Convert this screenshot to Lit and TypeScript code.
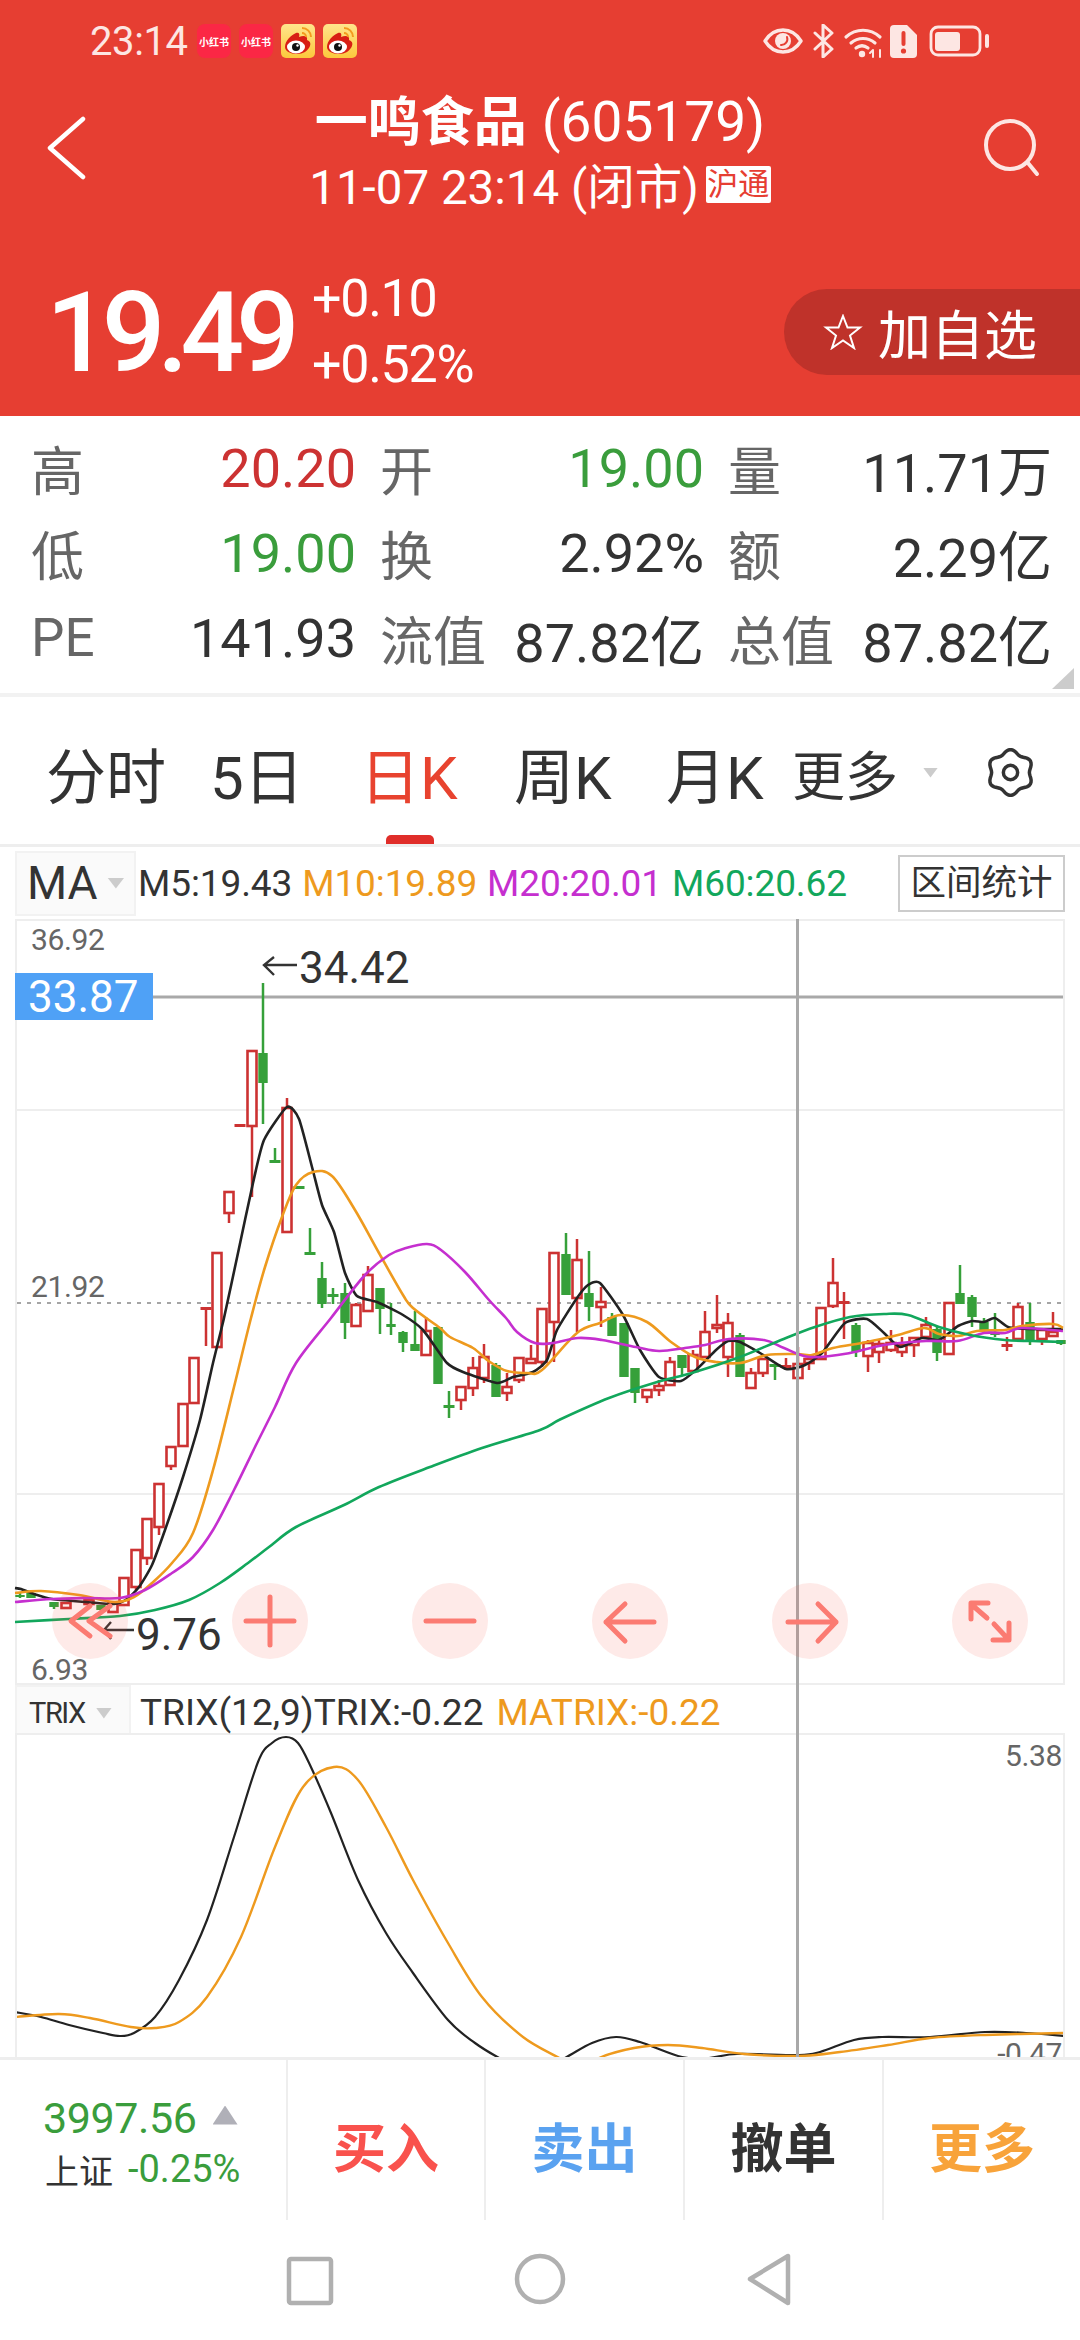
import {LitElement, html, css, svg} from 'lit';
import {customElement} from 'lit/decorators.js';

type Pt = [number, number];
// x, wick top, body top, body bottom, wick bottom, r(ise) or g(reen)
type Candle = [number, number, number, number, number, 'r' | 'g'];

// all chart data is in page pixels, the svg viewBoxes map it straight onto the page
const CANDLES: Candle[] = [
  [20, 1593, 1595, 1597, 1598, 'g'], [31, 1593, 1593, 1598, 1598, 'g'], [54, 1602, 1602, 1607, 1609, 'g'],
  [66, 1603, 1603, 1608, 1609, 'r'], [89, 1600, 1600, 1604, 1605, 'r'], [101, 1605, 1605, 1610, 1612, 'g'],
  [113, 1603, 1603, 1612, 1612, 'r'], [124, 1578, 1578, 1605, 1605, 'r'], [136, 1550, 1550, 1587, 1590, 'r'],
  [147, 1519, 1519, 1558, 1565, 'r'], [159, 1484, 1484, 1527, 1535, 'r'], [171, 1447, 1447, 1466, 1470, 'r'],
  [183, 1404, 1404, 1446, 1446, 'r'], [194, 1358, 1358, 1403, 1404, 'r'], [206, 1308, 1308, 1309, 1346, 'r'],
  [217, 1253, 1253, 1347, 1347, 'r'], [229, 1192, 1192, 1213, 1223, 'r'], [240, 1125, 1125, 1126, 1126, 'r'],
  [252, 1051, 1051, 1126, 1197, 'r'], [263, 983, 1053, 1083, 1124, 'g'], [275, 1148, 1161, 1162, 1162, 'g'],
  [287, 1098, 1108, 1232, 1232, 'r'], [299, 1187, 1187, 1188, 1188, 'g'], [310, 1228, 1253, 1254, 1254, 'g'],
  [322, 1262, 1278, 1304, 1308, 'g'], [333, 1288, 1295, 1296, 1304, 'g'], [345, 1283, 1293, 1323, 1339, 'g'],
  [356, 1303, 1305, 1326, 1326, 'r'], [368, 1266, 1275, 1311, 1311, 'r'], [380, 1288, 1288, 1309, 1334, 'g'],
  [391, 1303, 1324, 1327, 1335, 'g'], [403, 1331, 1332, 1343, 1352, 'g'], [415, 1311, 1344, 1351, 1351, 'g'],
  [426, 1317, 1331, 1355, 1355, 'r'], [438, 1327, 1327, 1384, 1384, 'g'], [449, 1391, 1406, 1407, 1418, 'g'],
  [461, 1387, 1387, 1400, 1410, 'r'], [473, 1357, 1368, 1388, 1396, 'r'], [484, 1344, 1357, 1378, 1383, 'r'],
  [496, 1363, 1365, 1397, 1397, 'g'], [507, 1373, 1387, 1393, 1401, 'r'], [519, 1358, 1358, 1380, 1383, 'r'],
  [531, 1345, 1359, 1363, 1363, 'r'], [542, 1309, 1309, 1362, 1367, 'r'], [554, 1253, 1253, 1322, 1362, 'r'],
  [566, 1233, 1254, 1295, 1295, 'g'], [577, 1239, 1260, 1298, 1332, 'r'], [589, 1251, 1293, 1307, 1321, 'g'],
  [601, 1287, 1302, 1307, 1327, 'r'], [612, 1313, 1317, 1336, 1336, 'g'], [624, 1323, 1323, 1377, 1377, 'g'],
  [635, 1368, 1368, 1393, 1403, 'g'], [647, 1390, 1390, 1397, 1403, 'r'], [659, 1380, 1386, 1390, 1396, 'r'],
  [670, 1357, 1362, 1385, 1385, 'r'], [682, 1355, 1355, 1368, 1375, 'g'], [693, 1350, 1355, 1371, 1371, 'r'],
  [705, 1311, 1332, 1357, 1357, 'r'], [717, 1295, 1325, 1328, 1333, 'r'], [728, 1313, 1323, 1357, 1377, 'r'],
  [740, 1333, 1335, 1377, 1377, 'g'], [751, 1368, 1373, 1388, 1388, 'r'], [763, 1359, 1359, 1373, 1377, 'r'],
  [775, 1365, 1365, 1366, 1380, 'g'], [786, 1358, 1366, 1367, 1370, 'r'], [798, 1347, 1364, 1378, 1378, 'r'],
  [809, 1359, 1359, 1363, 1370, 'r'], [821, 1308, 1308, 1359, 1359, 'r'], [833, 1258, 1283, 1306, 1308, 'r'],
  [844, 1292, 1302, 1303, 1339, 'r'], [856, 1323, 1325, 1352, 1357, 'g'], [868, 1340, 1343, 1356, 1372, 'r'],
  [879, 1340, 1344, 1352, 1363, 'r'], [891, 1330, 1343, 1350, 1352, 'r'], [902, 1337, 1345, 1352, 1357, 'r'],
  [914, 1338, 1338, 1345, 1357, 'r'], [926, 1317, 1325, 1337, 1337, 'r'], [937, 1327, 1329, 1353, 1361, 'g'],
  [949, 1303, 1303, 1354, 1354, 'r'], [960, 1265, 1293, 1304, 1304, 'g'], [972, 1295, 1297, 1317, 1327, 'g'],
  [984, 1318, 1322, 1330, 1333, 'g'], [995, 1313, 1332, 1335, 1337, 'g'], [1007, 1337, 1345, 1346, 1351, 'r'],
  [1018, 1303, 1307, 1339, 1339, 'r'], [1030, 1303, 1322, 1341, 1345, 'g'], [1042, 1330, 1330, 1339, 1345, 'r'],
  [1053, 1312, 1332, 1336, 1336, 'r'], [1061, 1340, 1340, 1344, 1345, 'g'],
];

const MA5: Pt[] = [
  [15, 1588], [21, 1589], [34, 1594], [52, 1599], [86, 1602], [114, 1604], [127, 1599], [139, 1587], [152, 1565],
  [165, 1530], [183, 1477], [200, 1420], [213, 1363], [224, 1318], [238, 1253], [253, 1183], [264, 1140], [287, 1107],
  [299, 1119], [312, 1167], [322, 1205], [334, 1232], [345, 1273], [357, 1296], [377, 1302], [403, 1315], [423, 1330],
  [447, 1363], [463, 1372], [497, 1383], [513, 1377], [533, 1372], [547, 1360], [557, 1330], [577, 1298], [588, 1285],
  [600, 1283], [623, 1315], [640, 1350], [659, 1377], [681, 1381], [698, 1368], [716, 1350], [728, 1341], [740, 1342],
  [760, 1353], [786, 1369], [805, 1365], [822, 1353], [845, 1323], [867, 1319], [884, 1333], [900, 1347], [922, 1338],
  [939, 1340], [958, 1326], [972, 1321], [984, 1322], [995, 1318], [1008, 1327], [1029, 1329], [1063, 1329],
];
const MA10: Pt[] = [
  [15, 1593], [41, 1591], [79, 1595], [114, 1602], [134, 1597], [152, 1583], [172, 1563], [193, 1533], [213, 1470],
  [234, 1387], [251, 1318], [265, 1267], [282, 1217], [296, 1185], [313, 1172], [332, 1176], [355, 1210], [379, 1253],
  [403, 1295], [413, 1308], [440, 1328], [450, 1337], [473, 1348], [490, 1362], [507, 1371], [527, 1373], [542, 1370],
  [577, 1333], [600, 1323], [621, 1315], [647, 1322], [671, 1342], [695, 1357], [716, 1362], [740, 1363], [767, 1355],
  [797, 1354], [812, 1355], [833, 1348], [867, 1342], [898, 1335], [924, 1328], [939, 1334], [958, 1336], [977, 1331],
  [1005, 1330], [1022, 1326], [1053, 1324], [1063, 1328],
];
const MA20: Pt[] = [
  [15, 1602], [52, 1599], [86, 1598], [120, 1598], [145, 1590], [172, 1573], [193, 1557], [213, 1530], [234, 1490],
  [255, 1447], [275, 1407], [296, 1363], [331, 1318], [365, 1275], [389, 1255], [406, 1248], [427, 1244], [441, 1250],
  [465, 1272], [489, 1300], [506, 1318], [517, 1332], [535, 1343], [553, 1343], [578, 1338], [602, 1340], [636, 1347],
  [659, 1351], [685, 1348], [705, 1345], [729, 1339], [764, 1340], [784, 1348], [810, 1357], [850, 1353], [884, 1345],
  [926, 1341], [957, 1341], [984, 1333], [1005, 1333], [1022, 1328], [1063, 1331],
];
const MA60: Pt[] = [
  [15, 1622], [69, 1619], [120, 1616], [155, 1610], [189, 1600], [220, 1583], [248, 1563], [269, 1547], [296, 1527],
  [344, 1505], [379, 1487], [430, 1467], [482, 1448], [540, 1430], [561, 1419], [609, 1398], [654, 1383], [695, 1372],
  [740, 1357], [781, 1340], [815, 1327], [850, 1317], [884, 1314], [908, 1315], [939, 1327], [970, 1335], [1005, 1340],
  [1032, 1341], [1063, 1342],
];
const TRIX: Pt[] = [
  [15, 2012], [41, 2017], [69, 2025], [103, 2033], [120, 2036], [134, 2033], [155, 2017], [179, 1980], [207, 1920],
  [234, 1837], [258, 1762], [272, 1743], [286, 1737], [298, 1743], [310, 1765], [331, 1813], [358, 1880], [386, 1933],
  [413, 1973], [448, 2020], [475, 2043], [501, 2059], [533, 2075], [565, 2058], [592, 2043], [616, 2037], [640, 2042],
  [682, 2057], [709, 2058], [737, 2054], [799, 2055], [820, 2052], [854, 2040], [882, 2037], [930, 2037], [985, 2032],
  [1026, 2033], [1065, 2036],
];
const MATRIX: Pt[] = [
  [15, 2017], [59, 2014], [90, 2018], [131, 2027], [155, 2028], [179, 2022], [207, 1997], [241, 1937], [275, 1847],
  [303, 1787], [334, 1767], [358, 1780], [386, 1827], [413, 1880], [448, 1943], [482, 1997], [523, 2037], [561, 2059],
  [580, 2072], [599, 2058], [634, 2048], [668, 2045], [702, 2048], [744, 2054], [799, 2056], [840, 2052], [888, 2045],
  [930, 2038], [985, 2035], [1065, 2033],
];

const STATS = [
  ['高', '20.20', 'up'], ['开', '19.00', 'down'], ['量', '11.71万', ''],
  ['低', '19.00', 'down'], ['换', '2.92%', ''], ['额', '2.29亿', ''],
  ['PE', '141.93', ''], ['流值', '87.82亿', ''], ['总值', '87.82亿', ''],
];

const TABS = ['分时', '5日', '日K', '周K', '月K'];

// catmull-rom through the sampled points, a bigger k stays closer to straight segments
function smooth(p: Pt[], k = 6) {
  let d = `M${p[0][0]} ${p[0][1]}`;
  for (let i = 0; i < p.length - 1; i++) {
    const a = p[i - 1] || p[i];
    const b = p[i];
    const c = p[i + 1];
    const e = p[i + 2] || c;
    const c1 = [b[0] + (c[0] - a[0]) / k, b[1] + (c[1] - a[1]) / k];
    const c2 = [c[0] - (e[0] - b[0]) / k, c[1] - (e[1] - b[1]) / k];
    d += `C${c1[0].toFixed(1)} ${c1[1].toFixed(1)} ${c2[0].toFixed(1)} ${c2[1].toFixed(1)} ${c[0]} ${c[1]}`;
  }
  return d;
}

function gearPath() {
  const pts: string[] = [];
  for (let i = 0; i < 72; i++) {
    const t = (i / 72) * Math.PI * 2;
    const r = 20.5 + 2 * Math.cos(6 * t);
    pts.push(`${(24 + r * Math.sin(t)).toFixed(1)} ${(24 - r * Math.cos(t)).toFixed(1)}`);
  }
  return 'M' + pts.join('L') + 'Z';
}

const weibo = html`<svg class="note" viewBox="0 0 34 34">
  <defs>
    <linearGradient id="wb" x1="0" y1="0" x2="0" y2="1">
      <stop offset="0" stop-color="#ffe58c"></stop>
      <stop offset="1" stop-color="#fcc83c"></stop>
    </linearGradient>
  </defs>
  <rect width="34" height="34" rx="5" fill="url(#wb)"></rect>
  <path d="M4 23c0-6 6-12 11-14 3-1 4 1 3 4 5-2 9-1 8 3 3 1 4 3 3 6-2 5-7 8-13 8-7 0-12-3-12-7z" fill="#d81e14"></path>
  <ellipse cx="15" cy="23" rx="9" ry="6.5" fill="#fff"></ellipse>
  <circle cx="15" cy="23" r="4" fill="#111"></circle>
  <circle cx="16.5" cy="21.5" r="1.2" fill="#fff"></circle>
  <path d="M21 4a9 9 0 0 1 9 9M21 9a4 4 0 0 1 4 4" fill="none" stroke="#f39a1e" stroke-width="2"></path>
</svg>`;

@customElement('kline-chart')
export class KlineChart extends LitElement {
  static styles = css`
    :host {
      display: block;
      position: relative;
    }
    svg {
      display: block;
    }
    .panel {
      margin: 0 15px;
      border: 2px solid #eee;
      box-sizing: border-box;
    }
    .main {
      height: 766px;
    }
    .main svg {
      width: 1046px;
      height: 762px;
      overflow: visible;
    }
    .sub {
      height: 324px;
      border-bottom: none;
    }
    .sub svg {
      width: 1046px;
      height: 322px;
    }
    .trix-row {
      display: flex;
      align-items: center;
      height: 48px;
      padding-left: 15px;
      font-size: 37px;
      color: #333;
      white-space: nowrap;
    }
    .trix-text {
      padding-top: 7px;
    }
    .trix-box {
      display: flex;
      align-items: center;
      box-sizing: border-box;
      width: 116px;
      height: 48px;
      margin-right: 9px;
      padding: 6px 0 0 12px;
      background: #fafafa;
      border: 2px solid #f2f2f2;
      border-bottom: none;
      font-size: 29px;
      letter-spacing: -1.4px;
    }
    .tri {
      width: 16px;
      height: 11px;
      margin-left: 11px;
      background: #ccc;
      clip-path: polygon(0 0, 100% 0, 50% 100%);
    }
    .ma10 {
      margin-left: 13px;
      color: #ee9a1e;
    }
    .cross {
      position: absolute;
      left: 796px;
      top: 0;
      bottom: 0;
      width: 3px;
      background: #a9a9a9;
    }
    .zoom-bar {
      position: absolute;
      left: 0;
      top: 664px;
      display: grid;
      grid-template-columns: repeat(6, 180px);
      justify-items: center;
    }
    .zoom-btn {
      width: 76px;
      height: 76px;
      border-radius: 50%;
      background: rgba(246, 80, 66, 0.12);
    }
    .zoom-btn path {
      fill: none;
      stroke: #fb7b72;
      stroke-width: 5;
      stroke-linecap: round;
      stroke-linejoin: round;
    }
    .axis {
      font-size: 30px;
      letter-spacing: -0.4px;
      fill: #666;
    }
    .mark {
      font-size: 44px;
      fill: #333;
    }
    .now {
      font-size: 44px;
      fill: #fff;
    }
  `;

  _candle(c: Candle) {
    const [x, hi, top, bottom, lo, kind] = c;
    const color = kind === 'r' ? '#cc3232' : '#36a03a';
    const wick = svg`<path d="M${x} ${hi}V${lo}" stroke=${color} stroke-width="2.5"></path>`;
    if (bottom - top <= 1) {
      return svg`${wick}<rect x=${x - 5.5} y=${top - 1} width="11" height="3" fill=${color}></rect>`;
    }
    if (kind === 'g') {
      return svg`${wick}<rect x=${x - 4.7} y=${top} width="9.4" height=${bottom - top} fill=${color}></rect>`;
    }
    return svg`${wick}<rect x=${x - 4.5} y=${top} width="9" height=${bottom - top} fill="#fff" stroke=${color} stroke-width="2.6"></rect>`;
  }

  render() {
    const line = (p: Pt[], color: string, w = 2.6, k = 6) =>
      svg`<path d=${smooth(p, k)} fill="none" stroke=${color} stroke-width=${w} stroke-linejoin="round"></path>`;
    return html`
      <div class="panel main">
        <svg viewBox="17 921 1046 762">
          <path d="M17 1110H1063M17 1494H1063" stroke="#eee" stroke-width="2"></path>
          <path d="M17 1303H1063" stroke="#888" stroke-width="1.5" stroke-dasharray="4 6"></path>
          <path d="M153 997H1063" stroke="#a9a9a9" stroke-width="3"></path>
          ${CANDLES.map((c) => this._candle(c))}
          ${line(MA5, '#222', 2.6, 10)} ${line(MA10, '#ee9a1e')} ${line(MA20, '#c52fcf')} ${line(MA60, '#12a75c')}
          <text class="axis" x="31" y="950">36.92</text>
          <text class="axis" x="31" y="1297">21.92</text>
          <text class="axis" x="31" y="1680">6.93</text>
          <rect x="15" y="973" width="138" height="47" fill="#4fa1f6"></rect>
          <text class="now" x="28" y="1012">33.87</text>
          <path d="M297 965H264M274 957L264 965L274 975M134 1630H104M111 1622L104 1630L111 1639" fill="none" stroke="#333" stroke-width="2.4"></path>
          <text class="mark" x="299" y="983">34.42</text>
          <text class="mark" x="136" y="1650">9.76</text>
        </svg>
      </div>
      <div class="trix-row">
        <div class="trix-box">TRIX<span class="tri"></span></div>
        <span class="trix-text">TRIX(12,9)TRIX:-0.22<span class="ma10">MATRIX:-0.22</span></span>
      </div>
      <div class="panel sub">
        <svg viewBox="17 1735 1046 322">
          ${line(TRIX, '#222', 2.2)} ${line(MATRIX, '#ee9a1e', 2.4)}
          <text class="axis" x="1062" y="1766" text-anchor="end">5.38</text>
          <text class="axis" x="1062" y="2064" text-anchor="end">-0.47</text>
        </svg>
      </div>
      <div class="cross"></div>
      <div class="zoom-bar">
        <svg class="zoom-btn" viewBox="0 0 76 76"><path d="M38 23L19 38L38 53M58 23L37 38L58 53"></path></svg>
        <svg class="zoom-btn" viewBox="0 0 76 76"><path d="M14 38H62M38 14V62"></path></svg>
        <svg class="zoom-btn" viewBox="0 0 76 76"><path d="M14 38H62"></path></svg>
        <svg class="zoom-btn" viewBox="0 0 76 76"><path d="M14 39H62M33 21L14 39L33 58"></path></svg>
        <svg class="zoom-btn" viewBox="0 0 76 76"><path d="M16 39H64M46 21L64 39L46 58"></path></svg>
        <svg class="zoom-btn" viewBox="0 0 76 76"><path d="M36 20H19V36M20 22L35 35M41 57H57V40M42 41L56 56"></path></svg>
      </div>
    `;
  }
}

@customElement('app-root')
export class AppRoot extends LitElement {
  static styles = css`
    :host {
      display: block;
      width: 1080px;
      height: 2340px;
      overflow: hidden;
      background: #fff;
      font-family: Roboto, 'Noto Sans CJK SC', sans-serif;
      color: #333;
    }
    svg {
      display: block;
    }

    /* red quote header */
    .header {
      height: 416px;
      box-sizing: border-box;
      background: #e63e32;
      color: #fff;
    }
    .status {
      display: flex;
      align-items: center;
      height: 82px;
      padding: 0 90px;
      color: #fde6e3;
    }
    .clock {
      width: 107px;
      font-size: 40px;
      letter-spacing: -0.4px;
    }
    .note {
      width: 34px;
      height: 34px;
      margin-right: 8px;
    }
    .xhs {
      display: flex;
      align-items: center;
      justify-content: center;
      background: #fb2745;
      border-radius: 8px;
      color: #fff;
      font-size: 10px;
      font-weight: 700;
    }
    .status-icons {
      width: 227px;
      height: 34px;
      margin-left: auto;
    }
    .titlebar {
      display: grid;
      grid-template-columns: 160px 1fr 160px;
      align-items: center;
      height: 130px;
    }
    .back {
      width: 40px;
      height: 64px;
      margin-left: 47px;
    }
    .search {
      width: 58px;
      height: 60px;
      justify-self: end;
      margin-right: 39px;
    }
    .title-block {
      text-align: center;
    }
    .title {
      font-size: 55px;
      line-height: 80px;
      white-space: nowrap;
    }
    .title b {
      font-size: 53px;
      font-weight: 700;
      margin-right: 15px;
    }
    .subtitle {
      display: flex;
      align-items: center;
      justify-content: center;
      font-size: 47.5px;
      line-height: 50px;
      white-space: nowrap;
    }
    .tag {
      margin-left: 7px;
      width: 65px;
      height: 37px;
      margin-top: -8px;
      background: #fff;
      border-radius: 2px;
      color: #e63e32;
      font-size: 31px;
      line-height: 37px;
      text-align: center;
    }
    .quote {
      display: flex;
      align-items: center;
      height: 120px;
      margin-top: 60px;
      padding-left: 46px;
    }
    .price {
      width: 266px;
      font-size: 112px;
      font-weight: 500;
      letter-spacing: -8px;
    }
    .change {
      font-size: 52px;
      line-height: 66px;
      letter-spacing: -1.3px;
    }
    .watch {
      display: flex;
      align-items: center;
      box-sizing: border-box;
      width: 296px;
      height: 86px;
      margin-left: auto;
      padding-left: 39px;
      background: #bf322a;
      border-radius: 43px 0 0 43px;
      font-size: 53px;
    }
    .watch svg {
      width: 40px;
      height: 36px;
      margin-right: 15px;
    }

    /* high / low table */
    .stats {
      position: relative;
      display: grid;
      grid-template-columns: 325px 324px 324px;
      grid-auto-rows: 85px;
      column-gap: 24px;
      height: 255px;
      padding: 9px 28px 13px 31px;
      border-bottom: 4px solid #f2f2f2;
    }
    .stat {
      display: flex;
      align-items: center;
      justify-content: space-between;
      font-size: 53px;
      white-space: nowrap;
    }
    .stat label {
      color: #666;
    }
    .stat span {
      margin-top: 2px;
      font-size: 54px;
    }
    .up {
      color: #cc3232;
    }
    .down {
      color: #3a9d3c;
    }
    .corner {
      position: absolute;
      right: 6px;
      bottom: 4px;
      width: 22px;
      height: 21px;
      background: #ccc;
      clip-path: polygon(100% 0, 100% 100%, 0 100%);
    }

    /* period tabs */
    .tabs {
      display: grid;
      grid-template-columns: 164px 150px 154px 152px 126px 131px 63px auto;
      align-items: center;
      height: 147px;
      padding-left: 46px;
      border-bottom: 3px solid #eee;
      font-size: 60px;
      white-space: nowrap;
    }
    .tab {
      position: relative;
      display: flex;
      align-items: center;
      height: 100%;
      padding-top: 4px;
      box-sizing: border-box;
    }
    .tab.small {
      font-size: 53px;
    }
    .tab.active {
      color: #e8432f;
    }
    .tab.active::after {
      content: '';
      position: absolute;
      left: 26px;
      bottom: 0;
      width: 48px;
      height: 9px;
      background: #e02e2a;
      border-radius: 5px 5px 0 0;
    }
    .tab-tri {
      width: 15px;
      height: 10px;
      background: #ccc;
      clip-path: polygon(0 0, 100% 0, 50% 100%);
    }
    .gear {
      width: 49px;
      height: 49px;
    }

    /* moving average legend */
    .legend {
      display: flex;
      align-items: center;
      height: 72px;
      padding: 0 15px;
      font-size: 37px;
      letter-spacing: -0.1px;
      white-space: nowrap;
    }
    .ma-box {
      display: flex;
      align-items: center;
      box-sizing: border-box;
      width: 121px;
      height: 65px;
      margin-right: 2px;
      padding-left: 10px;
      background: #fafafa;
      border: 2px solid #f2f2f2;
      font-size: 46px;
    }
    .ma-box .tab-tri {
      width: 17px;
      height: 11px;
      margin-left: 10px;
    }
    .m10 {
      color: #ee9a1e;
      margin-left: 10px;
    }
    .m20 {
      color: #c52fcf;
      margin-left: 10px;
    }
    .m60 {
      color: #12a75c;
      margin-left: 10px;
    }
    .range {
      box-sizing: border-box;
      width: 167px;
      height: 57px;
      margin-left: auto;
      border: 2px solid #ccc;
      font-size: 35.5px;
      letter-spacing: 0;
      line-height: 52px;
      text-align: center;
    }

    /* order buttons */
    .footer {
      display: grid;
      grid-template-columns: 286px 198px 199px 199px 198px;
      height: 160px;
      border-top: 3px solid #eee;
    }
    .index {
      padding: 32px 0 0 43px;
    }
    .index-top {
      display: flex;
      align-items: center;
      height: 52px;
      font-size: 43px;
      letter-spacing: -0.4px;
      color: #3a9d3c;
    }
    .index-tri {
      width: 25px;
      height: 19px;
      margin-left: 16px;
      margin-top: -6px;
      background: #b0b0b8;
      clip-path: polygon(50% 0, 100% 100%, 0 100%);
    }
    .index-bottom {
      display: flex;
      align-items: center;
      height: 50px;
      padding-left: 2px;
      font-size: 34px;
    }
    .index-bottom span {
      margin-left: 15px;
      font-size: 38px;
      color: #3a9d3c;
    }
    .action {
      display: flex;
      align-items: center;
      justify-content: center;
      border-left: 2px solid #eee;
      font-size: 53px;
      font-weight: 700;
      padding-top: 10px;
    }
    .buy {
      color: #f9524d;
    }
    .sell {
      color: #5aa2f0;
    }
    .cancel {
      color: #333;
    }
    .more {
      color: #f8a33a;
    }

    /* android nav */
    .nav {
      height: 120px;
    }
    .nav svg {
      width: 1080px;
      height: 120px;
    }
  `;

  render() {
    return html`
      <div class="header">
        <div class="status">
          <div class="clock">23:14</div>
          <div class="note xhs">小红书</div>
          <div class="note xhs">小红书</div>
          ${weibo} ${weibo}
          <svg class="status-icons" viewBox="763 23 227 34" fill="none" stroke="#fde6e3" stroke-linecap="round" stroke-linejoin="round">
            <path d="M765 40c5-8 11-11 18-11s13 3 18 11c-5 8-11 11-18 11s-13-3-18-11z" stroke-width="3.4"></path>
            <circle cx="783" cy="40" r="8" fill="#fde6e3" stroke="none"></circle>
            <path d="M787 36a6 6 0 0 1-6 8" stroke="#e63e32" stroke-width="2"></path>
            <path d="M815 32L832 48L823 56V24L832 32L815 48" stroke-width="3"></path>
            <path d="M846 36c10-9 24-9 34 0M851 42c7-6 17-6 24 0M856 47c4-3 8-3 12 0" stroke-width="3.2"></path>
            <circle cx="862" cy="53" r="3.2" fill="#fde6e3" stroke="none"></circle>
            <path d="M873 56V49L870 52M880 49V56" stroke-width="2"></path>
            <path d="M894 24H907L917 34V53a4 4 0 0 1-4 4H894a4 4 0 0 1-4-4V28a4 4 0 0 1 4-4z" fill="#fde6e3" stroke="none"></path>
            <path d="M903.5 32V43" stroke="#e63e32" stroke-width="4"></path>
            <circle cx="903.5" cy="50" r="2.6" fill="#e63e32" stroke="none"></circle>
            <rect x="931" y="26" width="49" height="28" rx="7" stroke-width="2.8"></rect>
            <rect x="935" y="31" width="25" height="19" rx="3" fill="#fde6e3" stroke="none"></rect>
            <rect x="985" y="33" width="4" height="14" rx="2" fill="#fde6e3" stroke="none"></rect>
          </svg>
        </div>
        <div class="titlebar">
          <svg class="back" viewBox="0 0 40 64" fill="none" stroke="#fff" stroke-width="4.5" stroke-linecap="round" stroke-linejoin="round">
            <path d="M36 3L3 32L36 61"></path>
          </svg>
          <div class="title-block">
            <div class="title"><b>一鸣食品</b>(605179)</div>
            <div class="subtitle">11-07 23:14 (闭市)<span class="tag">沪通</span></div>
          </div>
          <svg class="search" viewBox="0 0 58 60" fill="none" stroke="#fde6e3" stroke-width="4" stroke-linecap="round">
            <circle cx="27" cy="27" r="24"></circle>
            <path d="M45 45L54 56"></path>
          </svg>
        </div>
        <div class="quote">
          <div class="price">19.49</div>
          <div class="change"><div>+0.10</div><div>+0.52%</div></div>
          <div class="watch">
            <svg viewBox="0 0 40 36" fill="none" stroke="#fff" stroke-width="2">
              <path d="M20 2L24.5 13.5H37L27 21.5L31 34L20 26.5L9 34L13 21.5L3 13.5H15.5Z"></path>
            </svg>
            加自选
          </div>
        </div>
      </div>

      <div class="stats">
        ${STATS.map(
          ([name, value, tone]) => html`<div class="stat"><label>${name}</label><span class=${tone}>${value}</span></div>`
        )}
        <div class="corner"></div>
      </div>

      <div class="tabs">
        ${TABS.map((t) => html`<div class="tab ${t === '日K' ? 'active' : ''}">${t}</div>`)}
        <div class="tab small">更多</div>
        <div class="tab"><span class="tab-tri"></span></div>
        <div class="tab">
          <svg class="gear" viewBox="0 0 48 48" fill="none" stroke="#333" stroke-width="3.4">
            <path d=${gearPath()}></path>
            <circle cx="24" cy="24" r="7"></circle>
          </svg>
        </div>
      </div>

      <div class="legend">
        <div class="ma-box">MA<span class="tab-tri"></span></div>
        M5:19.43
        <span class="m10">M10:19.89</span>
        <span class="m20">M20:20.01</span>
        <span class="m60">M60:20.62</span>
        <div class="range">区间统计</div>
      </div>

      <kline-chart></kline-chart>

      <div class="footer">
        <div class="index">
          <div class="index-top">3997.56<span class="index-tri"></span></div>
          <div class="index-bottom">上证<span>-0.25%</span></div>
        </div>
        <div class="action buy">买入</div>
        <div class="action sell">卖出</div>
        <div class="action cancel">撤单</div>
        <div class="action more">更多</div>
      </div>

      <div class="nav">
        <svg viewBox="0 2220 1080 120" fill="none" stroke="#b0b0b0" stroke-width="4.5" stroke-linejoin="round">
          <rect x="289" y="2259" width="42" height="44" rx="2"></rect>
          <circle cx="540" cy="2279" r="23"></circle>
          <path d="M788 2256V2303L750 2279Z"></path>
        </svg>
      </div>
    `;
  }
}
